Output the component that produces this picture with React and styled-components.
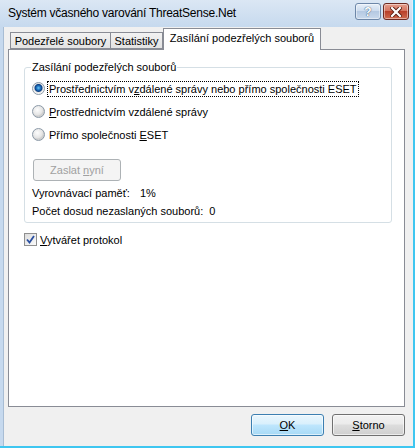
import React from 'react';
import styled, { createGlobalStyle } from 'styled-components';

const GlobalStyle = createGlobalStyle`
  html, body {
    margin: 0;
    padding: 0;
    background: #f0f0f0;
  }
  body {
    font-family: 'Liberation Sans', Arial, sans-serif;
    font-size: 11px;
    color: #000;
  }
`;

// Window frame
const Window = styled.div`
  width: 415px;
  height: 448px;
  box-sizing: border-box;
  display: flex;
  flex-direction: column;
  border-right: 2px solid #3ec6f0;
  border-bottom: 2px solid #3ec6f0;
  background: #f0f0f0;
  overflow: hidden;
`;

const TitleBar = styled.div`
  height: 27px;
  flex: none;
  display: flex;
  align-items: flex-start;
  padding: 0 4px 0 8px;
  background: linear-gradient(#dbe7f4, #c6d9ee);
  box-shadow: inset -1px 0 0 #e6eef8;
  font-size: 12px;
  color: #000;
`;

const Title = styled.div`
  flex: 1;
  margin-top: 6px;
  letter-spacing: -0.25px;
`;

const CaptionButtons = styled.div`
  display: flex;
  gap: 2px;
  margin-top: 3px;
`;

const CaptionButton = styled.div`
  width: 26px;
  height: 17px;
  box-sizing: border-box;
  border: 1px solid ${(p) => (p.$close ? '#6d2a22' : '#6d87a8')};
  border-radius: 3px;
  background: ${(p) =>
    p.$close
      ? 'linear-gradient(#e49e8d 0%, #d47461 45%, #b8402a 50%, #cf6a4f 100%)'
      : 'linear-gradient(#e7eff8 0%, #cddcee 45%, #b5c9e2 50%, #c9d9ec 100%)'};
  box-shadow: inset 0 0 0 1px rgba(255, 255, 255, 0.45);
  display: flex;
  align-items: center;
  justify-content: center;
  font-weight: bold;
  font-size: 12px;
  color: #fff;
  text-shadow: 0 0 1px #3d5878, 0 0 1px #3d5878;
`;

const Body = styled.div`
  flex: 1;
  display: flex;
  flex-direction: column;
  padding: 2px 8px 10px 5px;
  border-left: 3px solid #c6d9ee;
  box-shadow: inset 1px 0 0 #a8bdd4;
`;

// Tabs
const TabStrip = styled.div`
  display: flex;
  align-items: flex-end;
  height: 21px;
  padding-left: 2px;
  position: relative;
  z-index: 1;
  margin-bottom: -1px;
`;

const Tab = styled.div`
  box-sizing: border-box;
  width: ${(p) => p.$w}px;
  height: ${(p) => (p.$active ? '22px' : '17px')};
  margin-bottom: ${(p) => (p.$active ? '0' : '1px')};
  padding-top: ${(p) => (p.$active ? '3px' : '2px')};
  text-align: center;
  border: 1px solid #898c95;
  border-bottom: ${(p) => (p.$active ? 'none' : '1px solid #898c95')};
  border-left-width: ${(p) => (p.$first || p.$active ? '1px' : '0')};
  background: ${(p) => (p.$active ? '#fff' : 'linear-gradient(#f2f2f2, #e3e3e3)')};
  white-space: nowrap;
`;

const Panel = styled.div`
  flex: 1;
  background: #fff;
  border: 1px solid #898c95;
  padding: 11px 12px 0 15px;
  display: flex;
  flex-direction: column;
`;

const GroupBox = styled.fieldset`
  margin: 0;
  padding: 4px 7px 2px 7px;
  border: 1px solid #d5dfe5;
  border-radius: 3px;
  min-width: 0;
`;

const Legend = styled.legend`
  padding: 0 1px;
  margin-left: -1px;
  font-size: 11px;
`;

const RadioRow = styled.label`
  display: flex;
  align-items: center;
  height: 23px;
  gap: 3px;
`;

const RadioDot = styled.span`
  width: 13px;
  height: 13px;
  box-sizing: border-box;
  border-radius: 50%;
  border: 1px solid #8c9aa8;
  background: ${(p) =>
    p.$checked
      ? 'radial-gradient(circle at 50% 45%, #68c7f5 0, #1f74c2 2px, #0c3f82 3.5px, #e6e6e6 4.5px, #fafafa 6px)'
      : 'radial-gradient(circle at 40% 35%, #fdfdfd 0, #e4e4e4 5px, #d0d0d0 6px)'};
  flex: none;
`;

const LabelText = styled.span`
  padding: 1px 1px;
  outline: ${(p) => (p.$focused ? '1px dotted #000' : 'none')};
  outline-offset: 0;
  white-space: nowrap;
`;

const Key = styled.span`
  text-decoration: underline;
`;

const PushButton = styled.div`
  box-sizing: border-box;
  width: ${(p) => p.$w || 73}px;
  height: 22px;
  display: flex;
  align-items: center;
  justify-content: center;
  border-radius: 3px;
  border: 1px solid ${(p) => (p.$disabled ? '#adb2b5' : p.$default ? '#3c7fb1' : '#707070')};
  background: ${(p) =>
    p.$disabled
      ? '#f4f4f4'
      : p.$default
      ? 'linear-gradient(#eaf6fd 0%, #d9f0fc 45%, #bee6fd 50%, #a7d9f5 100%)'
      : 'linear-gradient(#f2f2f2 0%, #ebebeb 45%, #dddddd 50%, #cfcfcf 100%)'};
  box-shadow: inset 0 0 0 1px ${(p) => (p.$disabled ? 'transparent' : 'rgba(255,255,255,0.6)')};
  color: ${(p) => (p.$disabled ? '#a0a0a0' : '#000')};
`;

const SendButtonWrap = styled.div`
  margin: 13px 0 3px 1px;
`;

const InfoLine = styled.div`
  height: 18px;
  line-height: 18px;
  white-space: nowrap;
`;

const InfoValue = styled.span`
  margin-left: ${(p) => p.$gap}px;
`;

const CheckRow = styled.label`
  display: flex;
  align-items: center;
  gap: 3px;
  margin-top: 10px;
`;

const CheckBox = styled.span`
  width: 13px;
  height: 13px;
  box-sizing: border-box;
  border: 1px solid #8f8f8f;
  background: linear-gradient(135deg, #dcdcdc, #fbfbfb);
  display: flex;
  align-items: center;
  justify-content: center;
  flex: none;
`;

const ButtonRow = styled.div`
  display: flex;
  justify-content: flex-end;
  gap: 8px;
  margin-top: 7px;
`;

const CloseGlyph = () => (
  <svg width="12" height="10" viewBox="0 0 12 10">
    <path d="M2 1 L10 9 M10 1 L2 9" stroke="#5a1d12" strokeWidth="4" strokeLinecap="square" />
    <path d="M2 1 L10 9 M10 1 L2 9" stroke="#fff" strokeWidth="2.2" strokeLinecap="square" />
  </svg>
);

const CheckMark = () => (
  <svg width="9" height="9" viewBox="0 0 9 9">
    <path d="M1 4.5 L3.5 7.5 L8 1" fill="none" stroke="#2a4fa0" strokeWidth="1.8" />
  </svg>
);

const App = () => {
  return (
    <>
      <GlobalStyle />
      <Window>
        <TitleBar>
          <Title>Systém včasného varování ThreatSense.Net</Title>
          <CaptionButtons>
            <CaptionButton>?</CaptionButton>
            <CaptionButton $close>
              <CloseGlyph />
            </CaptionButton>
          </CaptionButtons>
        </TitleBar>
        <Body>
          <TabStrip>
            <Tab $first $w={101}>Podezřelé soubory</Tab>
            <Tab $w={52}>Statistiky</Tab>
            <Tab $active $w={158}>Zasílání podezřelých souborů</Tab>
          </TabStrip>
          <Panel>
            <GroupBox>
              <Legend>Zasílání podezřelých souborů</Legend>
              <RadioRow>
                <RadioDot $checked />
                <LabelText $focused>
                  Prostřednictvím v<Key>z</Key>dálené správy nebo přímo společnosti ESET
                </LabelText>
              </RadioRow>
              <RadioRow>
                <RadioDot />
                <LabelText>
                  <Key>P</Key>rostřednictvím vzdálené správy
                </LabelText>
              </RadioRow>
              <RadioRow>
                <RadioDot />
                <LabelText>
                  Přímo společnosti <Key>E</Key>SET
                </LabelText>
              </RadioRow>
              <SendButtonWrap>
                <PushButton $disabled $w={88}>
                  Zaslat&nbsp;<Key>n</Key>yní
                </PushButton>
              </SendButtonWrap>
              <InfoLine>
                Vyrovnávací paměť:<InfoValue $gap={10}>1%</InfoValue>
              </InfoLine>
              <InfoLine>
                Počet dosud nezaslaných souborů:<InfoValue $gap={6}>0</InfoValue>
              </InfoLine>
            </GroupBox>
            <CheckRow>
              <CheckBox>
                <CheckMark />
              </CheckBox>
              <span>
                <Key>V</Key>ytvářet protokol
              </span>
            </CheckRow>
          </Panel>
          <ButtonRow>
            <PushButton $default>
              <Key>O</Key>K
            </PushButton>
            <PushButton>
              <Key>S</Key>torno
            </PushButton>
          </ButtonRow>
        </Body>
      </Window>
    </>
  );
};

export default App;
